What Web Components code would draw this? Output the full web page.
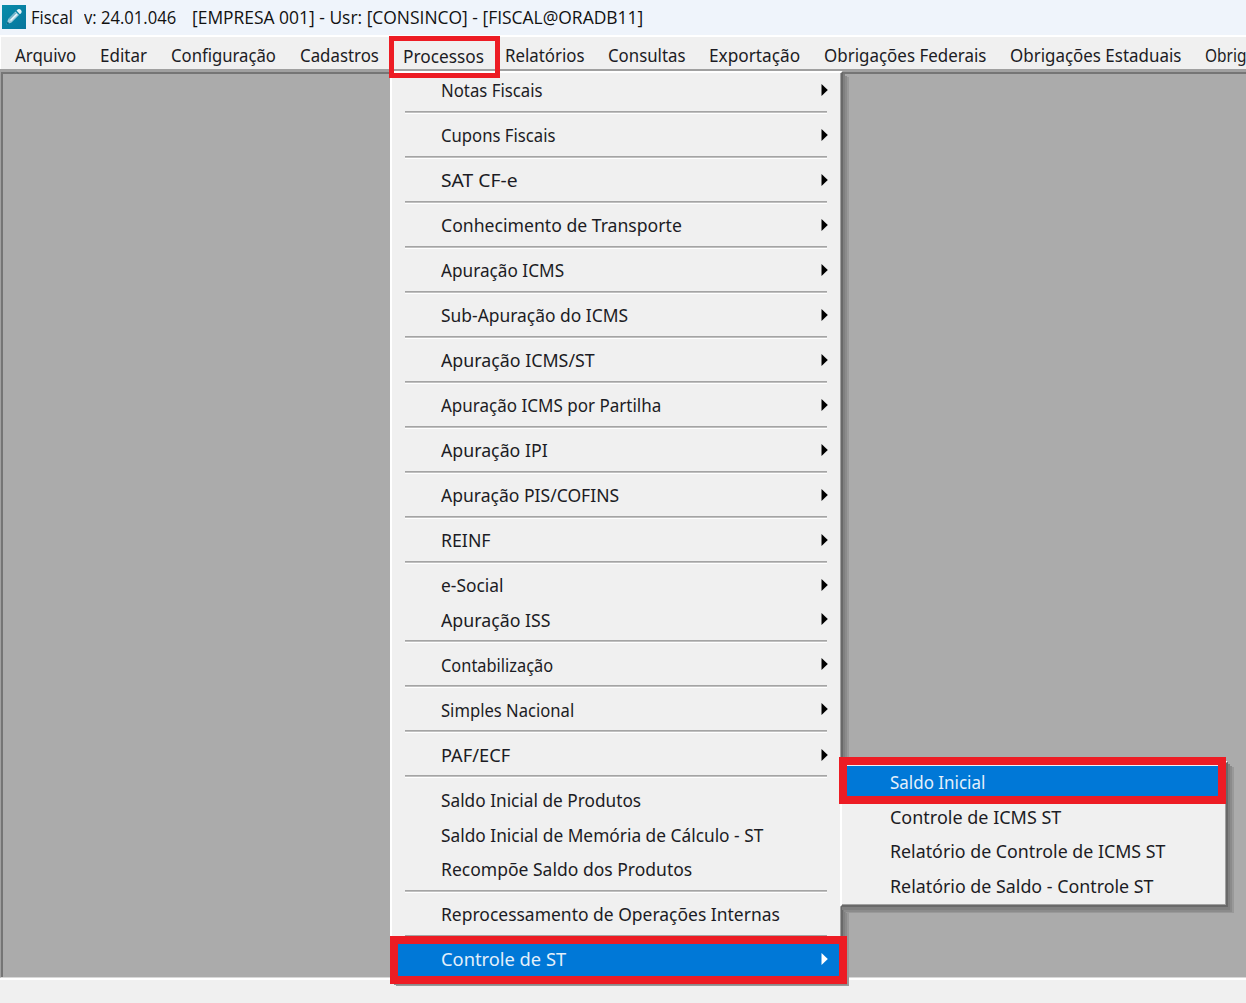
<!DOCTYPE html>
<html lang="pt-BR">
<head>
<meta charset="utf-8">
<title>Fiscal</title>
<style>
html,body{margin:0;width:1246px;height:1003px;overflow:hidden}
</style>
</head>
<body>
<fiscal-app></fiscal-app>
<script>
// Label that condenses its glyphs horizontally to a given width.
class FitLabel extends HTMLElement{
  connectedCallback(){
    const w=+this.getAttribute('w');
    const root=this.attachShadow({mode:'open'});
    root.innerHTML=`<style>:host{display:block;flex:none;width:${w}px;white-space:pre}
    span{display:inline-block;transform-origin:0 50%}</style><span><slot></slot></span>`;
    const s=root.querySelector('span');
    s.style.transform=`scaleX(${(w+.3)/s.offsetWidth})`;
  }
}
class TitleBar extends HTMLElement{
  constructor(){super();this.attachShadow({mode:'open'}).innerHTML=`<style>
  :host{display:flex;height:35px;background:#eff4fb;box-sizing:border-box;padding-left:2px;font:18px/35px "Open Sans","Noto Sans",sans-serif;color:#111}
  svg{display:block;margin:5px 5px 0 0;flex:none}
  .a{margin-right:11px}.b{margin-right:16px}
  </style><svg width="24" height="24" viewBox="0 0 24 24"><defs><linearGradient id="g" x1="0" y1="0" x2="1" y2="1"><stop stop-color="#078caa"/><stop offset="1" stop-color="#08769d"/></linearGradient></defs><rect width="24" height="24" fill="url(#g)"/>
  <path d="M4.500 19.500l1.700-5.500 7.300-7.500 3.500 3.500-7.500 7.500z" fill="#9fcbdc"/><path d="M14.500 5.500l1.500-1.300q1.800-.5 3 .8t.3 3l-1.400 1.300z" fill="#e6f4f8"/><path d="M8.500 15.500l6.500-6.500" stroke="#eef8fb" stroke-width="1.500"/><path d="M7 14.500l6.500-6.500" stroke="#3c93b0" stroke-width=".8"/><path d="M4.500 19.500l1-3 2 2z" fill="#0b6685"/></svg>
  <fit-label class="a" w="42">Fiscal</fit-label><fit-label class="b" w="92">v: 24.01.046</fit-label><fit-label w="451">[EMPRESA 001] - Usr: [CONSINCO] - [FISCAL@ORADB11]</fit-label>`}
}
class MenuBar extends HTMLElement{
  constructor(){super();
  const m=[['Arquivo',61],['Editar',47],['Configuração',105],['Cadastros',79],['Processos',81],['Relatórios',79],['Consultas',77],['Exportação',91],['Obrigações Federais',162],['Obrigações Estaduais',171],['Obrig',41]];
  this.attachShadow({mode:'open'}).innerHTML=`<style>
  :host{display:flex;gap:24px;height:34px;box-sizing:border-box;border-top:2px solid #fff;border-left:1px solid #fff;background:#f0f0f0;padding-left:14px;line-height:36px;overflow:hidden}
  .on{margin-right:-3px;padding-top:1px}
  </style>`+m.map(([t,w])=>`<fit-label w="${w}"${t=='Processos'?' class="on"':''}>${t}</fit-label>`).join('')}
}
class MenuItem extends HTMLElement{
  connectedCallback(){const on=this.hasAttribute('selected');
  this.attachShadow({mode:'open'}).innerHTML=`<style>
  :host{display:flex;align-items:center;justify-content:space-between;height:34.6px;box-sizing:border-box;padding:0 13px 0 var(--indent,48px);color:${on?'#e4f0fb':'#1c1c24'};background:${on?'#0078d7':'none'}}
  fit-label{padding-bottom:1px}
  svg{display:block;margin-top:-2px}
  </style><fit-label w="${this.getAttribute('w')}"><slot></slot></fit-label>${this.hasAttribute('arrow')?`<svg width="7" height="12" viewBox="0 0 7 12"><path d="M.5 0L6.800 6 .5 12z" fill="${on?'#fff':'#000'}"/></svg>`:''}`}
}
class MenuSep extends HTMLElement{
  constructor(){super();this.attachShadow({mode:'open'}).innerHTML=`<style>:host{display:block;height:10.430px;box-sizing:border-box;padding:2.700px 14px 0 13px}
  div{height:3px;background:linear-gradient(#a4a4a4 1px,#c0c0c0 1px 2px,#fff 2px)}</style><div></div>`}
}
class MenuPanel extends HTMLElement{
  constructor(){super();this.attachShadow({mode:'open'}).innerHTML=`<style>
  :host{display:block;box-sizing:border-box;background:#f0f0f0;border:2px solid;border-color:#fff #696969 #696969 #fff;box-shadow:inset -1px -1px #a0a0a0,2px 3px 0 #808080,4px 5px 0 #8b8b8b,6px 6px 0 #999}
  </style><slot></slot>`}
}
class RedFrame extends HTMLElement{
  constructor(){super();this.attachShadow({mode:'open'}).innerHTML=`<style>:host{display:block;box-sizing:border-box;border:8px solid #ed1c24}</style>`}
}
class FiscalApp extends HTMLElement{
  constructor(){super();
  const rows=[['Notas Fiscais',101,1,1],['Cupons Fiscais',114,1,1],['SAT CF-e',76,1,1],['Conhecimento de Transporte',241,1,1],['Apuração ICMS',123,1,1],['Sub-Apuração do ICMS',187,1,1],['Apuração ICMS/ST',153,1,1],['Apuração ICMS por Partilha',220,1,1],['Apuração IPI',106,1,1],['Apuração PIS/COFINS',178,1,1],['REINF',49,1,1],['e-Social',62,1,0],['Apuração ISS',109,1,1],['Contabilização',112,1,1],['Simples Nacional',133,1,1],['PAF/ECF',69,1,1],['Saldo Inicial de Produtos',200,0,0],['Saldo Inicial de Memória de Cálculo - ST',322,0,0],['Recompõe Saldo dos Produtos',251,0,1],['Reprocessamento de Operações Internas',339,0,1],['Controle de ST',125,1,0]];
  const sub=[['Saldo Inicial',95],['Controle de ICMS ST',171],['Relatório de Controle de ICMS ST',275],['Relatório de Saldo - Controle ST',263]];
  this.attachShadow({mode:'open'}).innerHTML=`<style>
  :host{display:flex;flex-direction:column;position:relative;width:1246px;height:1003px;overflow:hidden;background:#f0f0f0;font:18.700px/24px "Noto Sans","DejaVu Sans Condensed",sans-serif;color:#1c1c24}
  main{height:909px;box-sizing:border-box;background:#ababab;border-top:3px solid #a0a0a0;border-bottom:1px solid #d8d8d8;border-left:1px solid #a0a0a0;box-shadow:inset 2px 2px #757575}
  footer{flex:1;border-top:2px solid #fff}
  menu-panel,red-frame{position:absolute}
  .main{left:390px;top:71px;width:453px;height:909px;padding-top:.4px;--indent:48.700px}
  .sub{left:840px;top:761px;width:388px;height:146px;padding-top:2.500px}
  .f1{left:389px;top:36px;width:111px;height:42px;border-width:5px}
  .f2{left:390px;top:936px;width:457px;height:48px}
  .f3{left:839px;top:757px;width:387px;height:47px}
  </style><title-bar></title-bar><menu-bar></menu-bar><main></main><footer></footer>
  <menu-panel class="main">${rows.map(([t,w,a,s],i)=>`<menu-item w="${w}"${a?' arrow':''}${i==20?' selected':''}>${t}</menu-item>${s?'<menu-sep></menu-sep>':''}`).join('')}</menu-panel>
  <menu-panel class="sub">${sub.map(([t,w],i)=>`<menu-item w="${w}"${i?'':' selected'}>${t}</menu-item>`).join('')}</menu-panel>
  <red-frame class="f1"></red-frame><red-frame class="f2"></red-frame><red-frame class="f3"></red-frame>`}
}
customElements.define('fit-label',FitLabel);
customElements.define('title-bar',TitleBar);
customElements.define('menu-bar',MenuBar);
customElements.define('menu-item',MenuItem);
customElements.define('menu-sep',MenuSep);
customElements.define('menu-panel',MenuPanel);
customElements.define('red-frame',RedFrame);
customElements.define('fiscal-app',FiscalApp);
</script>
</body>
</html>
